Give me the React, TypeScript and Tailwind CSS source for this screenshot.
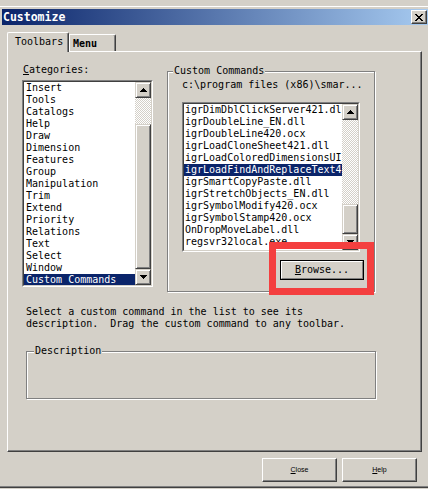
import type { ReactNode } from 'react';

const categories = [
  'Insert',
  'Tools',
  'Catalogs',
  'Help',
  'Draw',
  'Dimension',
  'Features',
  'Group',
  'Manipulation',
  'Trim',
  'Extend',
  'Priority',
  'Relations',
  'Text',
  'Select',
  'Window',
  'Custom Commands',
];

const commands = [
  'igrDimDblClickServer421.dll',
  'igrDoubleLine_EN.dll',
  'igrDoubleLine420.ocx',
  'igrLoadCloneSheet421.dll',
  'igrLoadColoredDimensionsUI.dll',
  'igrLoadFindAndReplaceText421.dll',
  'igrSmartCopyPaste.dll',
  'igrStretchObjects_EN.dll',
  'igrSymbolModify420.ocx',
  'igrSymbolStamp420.ocx',
  'OnDropMoveLabel.dll',
  'regsvr32local.exe',
];

// classic 3D edges
const raised =
  'bg-[#d4d0c8] border border-t-white border-l-white border-r-[#404040] border-b-[#404040] shadow-[inset_-1px_-1px_0_#808080]';
const scrollBtn =
  'bg-[#d4d0c8] border border-t-[#d4d0c8] border-l-[#d4d0c8] border-r-[#404040] border-b-[#404040] shadow-[inset_1px_1px_0_#ffffff,inset_-1px_-1px_0_#808080] flex items-center justify-center';
const checker =
  '[background-image:repeating-conic-gradient(#d4d0c8_0_25%,#ffffff_0_50%)] [background-size:2px_2px]';
const etched = 'border border-[#808080] shadow-[inset_1px_1px_0_#ffffff,1px_1px_0_#ffffff]';

function Arrow({ down }: { down?: boolean }) {
  return (
    <svg width="7" height="4" viewBox="0 0 7 4" shapeRendering="crispEdges" className={down ? 'rotate-180' : ''}>
      <path d="M3 0h1v1h1v1h1v1h1v1H0V3h1V2h1V1h1z" fill="#000" />
    </svg>
  );
}

function ScrollBar({ track, thumb }: { track: string; thumb: string }) {
  return (
    <div className="w-[16px] flex flex-col shrink-0">
      <div className={`h-[16px] ${scrollBtn}`}>
        <Arrow />
      </div>
      <div className={`${track} ${checker}`} />
      <div className={`${thumb} bg-[#d4d0c8] border border-t-[#d4d0c8] border-l-[#d4d0c8] border-r-[#404040] border-b-[#404040] shadow-[inset_1px_1px_0_#ffffff,inset_-1px_-1px_0_#808080]`} />
      <div className={`h-[16px] ${scrollBtn}`}>
        <Arrow down />
      </div>
    </div>
  );
}

function ListBox({
  items,
  selected,
  width,
  height,
  pad,
  children,
}: {
  items: string[];
  selected: number;
  width: string;
  height: string;
  pad: string;
  children: ReactNode;
}) {
  return (
    <div className={`${width} ${height} border border-t-[#808080] border-l-[#808080] border-r-white border-b-white`}>
      <div className="h-full flex bg-white border border-t-[#404040] border-l-[#404040] border-r-[#d4d0c8] border-b-[#d4d0c8]">
        <div className="flex-1 overflow-hidden">
          {items.map((item, i) => (
            <div
              key={item}
              className={`h-[12px] leading-[12px] whitespace-nowrap ${pad} ${
                i === selected ? 'bg-[#0a246a] text-white' : ''
              }`}
            >
              {item}
            </div>
          ))}
        </div>
        {children}
      </div>
    </div>
  );
}

export default function App() {
  return (
    <div className="w-[428px] h-[489px] overflow-hidden relative bg-[#d4d0c8] text-black text-[10px] font-['DejaVu_Sans_Mono',monospace]">
      {/* Window frame */}
      <div className="h-[6px]" />
      <div className="h-px bg-white" />
      <div className="h-[2px]" />

      {/* Title bar */}
      <div className="ml-[2px] h-[16px] flex items-center bg-linear-to-r/srgb from-[#0a246a] to-[#a6caf0]">
        <span className="pl-[1px] font-bold text-[11.5px] leading-[14px] text-white">Customize</span>
        <button className={`ml-auto mr-[1px] w-[16px] h-[14px] flex items-center justify-center ${raised}`}>
          <svg width="8" height="7" viewBox="0 0 8 7" shapeRendering="crispEdges">
            <path
              d="M0 0h2v1H0zM6 0h2v1H6zM1 1h2v1H1zM5 1h2v1H5zM2 2h4v1H2zM3 3h2v1H3zM2 4h4v1H2zM1 5h2v1H1zM5 5h2v1H5zM0 6h2v1H0zM6 6h2v1H6z"
              fill="#000"
            />
          </svg>
        </button>
      </div>

      {/* Tabs */}
      <div className="mt-[7px] ml-[7px] h-[19px] flex items-end">
        <div className="relative z-10 -mb-px w-[62px] h-[20px] bg-[#d4d0c8] border-t border-l border-white border-r border-r-[#404040] rounded-t-[2px] shadow-[inset_-1px_0_0_#808080] pl-[7px] pt-[3px] leading-[12px]">
          Toolbars
        </div>
        <div className="w-[47px] h-[17px] border-t border-l border-white border-r border-r-[#404040] rounded-tr-[2px] shadow-[inset_-1px_0_0_#808080] pl-[3px] pt-[3px] leading-[12px] font-bold">
          Menu
        </div>
      </div>

      {/* Tab pane */}
      <div className="ml-[7px] w-[415px] h-[401px] border-t border-l border-white border-r border-b border-r-[#404040] border-b-[#404040] shadow-[inset_-1px_-1px_0_#808080] pt-[12px] pl-[14px]">
        <div className="flex items-start">
          {/* Categories */}
          <div className="w-[131px]">
            <div className="h-[12px] leading-[12px] pl-[1px]">
              <span className="underline">C</span>ategories:
            </div>
            <div className="mt-[4px]">
              <ListBox items={categories} selected={16} width="w-[131px]" height="h-[207px]" pad="pl-[2px]">
                <ScrollBar track="h-[26px]" thumb="flex-1" />
              </ListBox>
            </div>
          </div>

          {/* Custom commands group */}
          <div className={`relative ml-[14px] mt-[7px] w-[208px] h-[221px] ${etched} pl-[14px] pt-[7px]`}>
            <span className="absolute left-[5px] -top-[7px] px-[1px] leading-[12px] bg-[#d4d0c8]">Custom Commands</span>
            <div className="h-[12px] leading-[12px] whitespace-nowrap">c:\program files (x86)\smar...</div>
            <div className="mt-[11px]">
              <ListBox items={commands} selected={5} width="w-[178px]" height="h-[150px]" pad="pl-[1px]">
                <ScrollBar track="h-[84px]" thumb="flex-1" />
              </ListBox>
            </div>
            <div className="mt-[8px] ml-[98px] w-[84px] h-[20px] border border-black">
              <button className="w-full h-full bg-[#d4d0c8] border border-t-white border-l-white border-r-[#808080] border-b-[#808080] leading-[12px]">
                <span className="underline">B</span>rowse...
              </button>
            </div>
          </div>
        </div>

        {/* Hint text */}
        <div className="mt-[14px] ml-[4px] leading-[12px] whitespace-pre">
          {'Select a custom command in the list to see its\ndescription.  Drag the custom command to any toolbar.'}
        </div>

        {/* Description group */}
        <div className={`relative mt-[21px] ml-[4px] w-[350px] h-[48px] ${etched}`}>
          <span className="absolute left-[7px] -top-[7px] px-[1px] leading-[12px] bg-[#d4d0c8]">Description</span>
        </div>
      </div>

      {/* Dialog buttons */}
      <div className="mt-[6px] pr-[11px] flex justify-end gap-[5px] font-['Liberation_Sans',sans-serif] text-[7px]">
        <button className={`w-[75px] h-[24px] ${raised}`}>
          <span className="underline">C</span>lose
        </button>
        <button className={`w-[75px] h-[24px] ${raised}`}>
          <span className="underline">H</span>elp
        </button>
      </div>

      {/* Window bottom edge */}
      <div className="mt-[4px] h-px bg-[#808080]" />
      <div className="h-px bg-[#404040]" />

      {/* Highlight around Browse */}
      <div className="absolute left-[269px] top-[242px] w-[105px] h-[53px] border-[7px] border-[#f43f3f]" />
    </div>
  );
}
